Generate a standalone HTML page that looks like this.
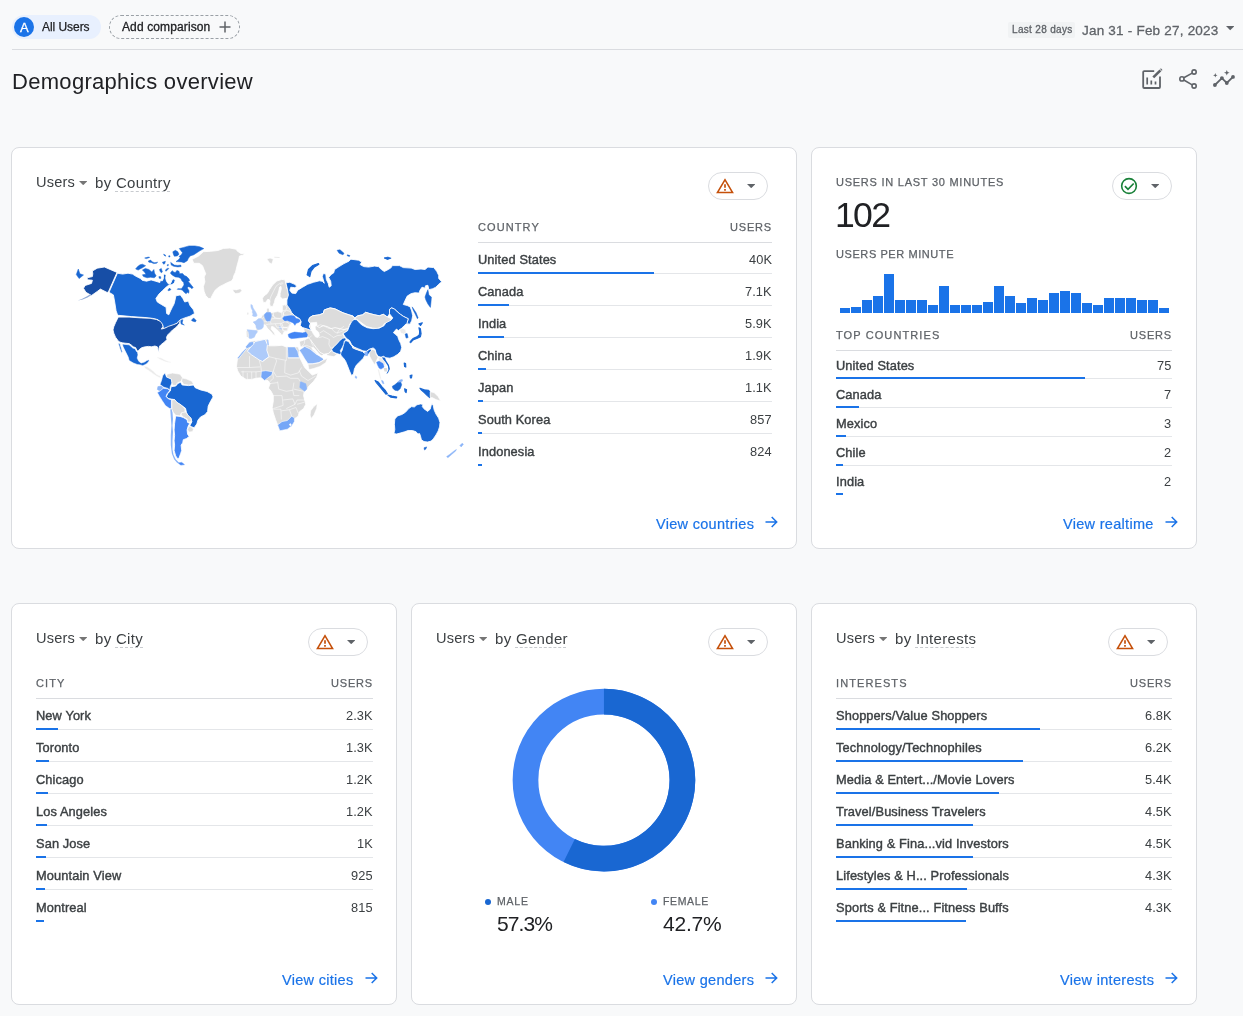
<!DOCTYPE html>
<html>
<head>
<meta charset="utf-8">
<title>Demographics overview</title>
<style>
*{box-sizing:border-box;margin:0;padding:0}
html,body{width:1243px;height:1016px;overflow:hidden;background:#f8f9fa}
body{font-family:"Liberation Sans",sans-serif;color:#202124;position:relative}
.abs{position:absolute}
.card{position:absolute;background:#fff;border:1px solid #dadce0;border-radius:8px}
.t{position:absolute;white-space:nowrap;line-height:1;will-change:transform}
.ttl{color:#3c4043;letter-spacing:.15px}
.hd{color:#5f6368;letter-spacing:1.1px;-webkit-text-stroke:.25px #5f6368}
.nm{color:#3c4043;-webkit-text-stroke:.4px #3c4043;letter-spacing:.12px}
.vl{color:#3c4043;letter-spacing:.1px}
.lk{color:#1a73e8;letter-spacing:.3px;-webkit-text-stroke:.2px #1a73e8}
.pill{position:absolute;width:60px;height:28px;border:1px solid #dadce0;border-radius:14px;background:#fff}
</style>
</head>
<body>

<!-- top bar -->
<div class="abs" style="left:12px;top:15px;width:89px;height:24px;background:#e8f0fe;border-radius:12px"></div>
<div class="abs" style="left:14px;top:17px;width:20px;height:20px;background:#1a73e8;border-radius:10px"></div>
<div class="t " style="left:19.6px;top:20.80px;font-size:13px;color:#fff;-webkit-text-stroke:.3px #fff">A</div>
<div class="t " style="left:42px;top:21.30px;font-size:12px;color:#202124;-webkit-text-stroke:.25px #202124;letter-spacing:-.05px">All Users</div>
<div class="abs" style="left:109px;top:15px;width:131px;height:24px;border-radius:12px;border:1px dashed #9aa0a6"></div>
<div class="t " style="left:122px;top:21.30px;font-size:12px;color:#202124;-webkit-text-stroke:.3px #202124;letter-spacing:.12px">Add comparison</div>
<svg class="abs" style="left:218px;top:20px" width="14" height="14" viewBox="0 0 14 14"><path d="M7 1.5v11M1.5 7h11" stroke="#5f6368" stroke-width="1.5" fill="none"/></svg>
<div class="abs" style="left:1008px;top:22px;width:67px;height:16px;background:#f1f3f4;border-radius:2px"></div>
<div class="t " style="left:1012px;top:25.00px;font-size:10px;color:#5f6368;-webkit-text-stroke:.3px #5f6368;letter-spacing:.32px">Last 28 days</div>
<div class="t " style="left:1082px;top:23.55px;font-size:13.5px;color:#5f6368;-webkit-text-stroke:.3px #5f6368;letter-spacing:.21px">Jan 31 - Feb 27, 2023</div>
<svg class="abs" style="left:1225.8px;top:26.4px" width="8.4" height="4.4" viewBox="0 0 10 5"><path d="M0 0h10L5 5z" fill="#5f6368"/></svg>
<div class="abs" style="left:12px;top:49px;width:1231px;height:1px;background:#dadce0;"></div>
<div class="t " style="left:12px;top:70.50px;font-size:22px;color:#202124;letter-spacing:.3px">Demographics overview</div>
<svg class="abs" style="left:1138px;top:64px" width="105" height="30" viewBox="1138 64 105 30" fill="none" stroke="#5f6368" stroke-linecap="butt">
<!-- edit chart -->
<path d="M1154.2 71.1H1144.2a1 1 0 0 0-1 1V87a1 1 0 0 0 1 1H1159a1 1 0 0 0 1-1V76.6" stroke-width="1.8"/>
<path d="M1147.2 77.6v6.8M1151.3 80.6v3.8M1155.5 81.4v3" stroke-width="1.7"/>
<path d="M1153.3 77.4L1160.4 70.4" stroke-width="2.6"/>
<path d="M1160.9 69.9l.8-.8" stroke-width="2.2"/>
<!-- share -->
<circle cx="1194.1" cy="72" r="2.1" stroke-width="1.6"/>
<circle cx="1181.9" cy="78.9" r="2.1" stroke-width="1.6"/>
<circle cx="1194.1" cy="86" r="2.1" stroke-width="1.6"/>
<path d="M1183.8 77.8L1192.2 73.1M1183.8 80L1192.2 84.9" stroke-width="1.6"/>
<!-- insights -->
<path d="M1214.9 85L1221.9 78.2L1226.8 83L1233 76.9" stroke-width="1.8"/>
<g fill="#5f6368" stroke="none"><circle cx="1214.9" cy="85" r="1.9"/><circle cx="1221.9" cy="78.1" r="1.9"/><circle cx="1226.8" cy="83" r="1.9"/><circle cx="1233" cy="76.9" r="1.9"/>
<path d="M1215.3 73.1l.6 1.6 1.6.6-1.6.6-.6 1.6-.6-1.6-1.6-.6 1.6-.6z"/>
<path d="M1226.8 70l.8 2 2 .8-2 .8-.8 2-.8-2-2-.8 2-.8z"/></g>
</svg>

<div class="card" style="left:11px;top:147px;width:786px;height:402px"></div>
<div class="card" style="left:811px;top:147px;width:386px;height:402px"></div>
<div class="card" style="left:11px;top:603px;width:386px;height:402px"></div>
<div class="card" style="left:411px;top:603px;width:386px;height:402px"></div>
<div class="card" style="left:811px;top:603px;width:386px;height:402px"></div>
<!-- card 1 -->
<div class="t ttl" style="left:35.7px;top:175.00px;font-size:14.6px;">Users</div>
<svg class="abs" style="left:79px;top:180.5px" width="8.4" height="4.2" viewBox="0 0 10 5"><path d="M0 0h10L5 5z" fill="#757575"/></svg>
<div class="t ttl" style="left:94.6px;top:174.70px;font-size:15px;letter-spacing:.32px">by Country</div>
<div class="abs" style="left:115px;top:191px;width:55px;height:0;border-top:1px dashed #c8cbcf"></div>
<div class="pill" style="left:708px;top:172px"></div>
<svg class="abs" style="left:716px;top:178px" width="18" height="16" viewBox="0 0 18 16"><path d="M9 0.2L0.1 15.3h17.8zM9 3.2L15.2 13.8H2.8z" fill="#c5500a" fill-rule="evenodd"/><path d="M9 6.3v3.4M9 11.1v1.7" stroke="#c5500a" stroke-width="1.7" fill="none"/></svg>
<svg class="abs" style="left:746.8px;top:184.1px" width="8.4" height="4.2" viewBox="0 0 10 5"><path d="M0 0h10L5 5z" fill="#5f6368"/></svg>
<svg class="abs" style="left:0;top:0" width="1243" height="1016" viewBox="0 0 1243 1016" stroke="#fff" stroke-width="0.6" stroke-linejoin="round">
<path fill="#e1e1e1" stroke-width="0.85" d="M246.3 336.9L246.1 331.7L247.1 329.7L251.1 330.1L255.9 330.5L256.3 328.1L254.3 323.3L253.1 322.1L255.9 320.9L258.3 318.8L260.7 318.4L262.0 315.2L264.4 314.4L266.4 312.4L266.8 308.8L268.8 308.4L269.2 311.2L270.4 312.4L273.2 312.4L277.6 311.6L281.7 312.8L282.5 310.4L282.5 305.6L284.9 304.8L286.9 304.4L288.9 307.2L291.3 310.4L292.9 313.6L294.5 315.2L294.1 316.0L291.3 315.6L287.3 316.0L284.1 316.4L282.5 318.8L284.9 320.9L287.3 320.5L290.5 321.7L291.3 324.1L289.7 325.3L288.5 328.1L288.1 330.5L286.5 331.3L284.1 331.7L282.9 334.9L281.3 334.9L280.1 332.9L276.8 329.7L272.8 326.5L271.6 326.5L271.2 328.9L274.4 332.9L275.4 335.5L273.2 334.7L270.4 331.3L267.2 328.1L265.6 325.3L263.6 324.5L263.2 327.3L261.5 328.9L258.3 329.7L257.5 331.7L255.5 334.5L254.3 337.3L251.1 338.6L249.1 338.2L246.7 337.1Z"/>
<path fill="#dcdcdc" stroke-width="0.85" d="M262.4 298.3L264.0 295.9L267.2 293.5L269.6 289.5L272.8 284.7L276.8 281.0L281.7 279.4L284.9 279.8L285.8 283.0L286.9 287.9L288.5 292.7L288.9 295.9L287.7 299.1L286.5 298.3L282.5 299.1L280.1 296.7L280.1 293.5L281.3 288.7L280.9 286.3L279.7 287.1L278.8 291.1L277.6 295.1L275.2 299.1L274.4 302.4L272.8 306.4L270.4 306.4L269.6 304.0L270.0 300.7L268.0 299.1L265.6 302.4L263.2 302.4Z"/>
<path fill="#dcdcdc" stroke-width="0.85" d="M251.7 341.0L256.0 340.4L265.7 339.3L267.4 339.3L269.0 345.8L275.5 345.8L282.0 345.3L286.3 346.9L287.4 346.4L298.2 346.9L299.3 350.2L299.3 356.7L302.0 362.1L304.7 367.5L308.0 370.7L312.3 375.1L318.2 372.7L316.6 377.2L313.4 381.6L309.0 385.9L306.9 389.1L304.7 391.3L303.6 395.6L304.7 400.0L305.8 404.3L303.6 408.6L299.3 411.9L298.2 416.2L295.0 418.4L294.4 421.6L291.7 425.9L287.4 429.2L279.8 430.8L277.6 424.9L275.5 419.5L273.3 413.0L272.2 407.5L273.3 401.0L273.3 395.6L271.1 391.3L268.4 388.1L270.1 383.7L267.9 380.5L264.6 380.5L260.9 377.8L256.0 378.3L251.7 379.4L246.2 379.4L240.8 376.1L237.6 370.7L236.5 366.4L237.0 362.1L237.6 357.7L241.9 352.3L246.2 348.0L245.7 346.4L249.5 342.0Z"/>
<path fill="#dcdcdc" stroke-width="0.85" d="M299.3 341.5L305.8 339.3L310.1 336.6L316.6 335.0L327.4 335.0L338.3 337.2L340.0 344.7L333.9 349.1L331.8 351.2L337.2 354.5L333.9 356.7L327.4 355.6L325.3 352.3L322.0 356.1L316.6 353.9L312.3 350.7L308.0 348.5L304.7 346.9L300.4 346.9Z"/>
<path fill="#dcdcdc" stroke-width="0.85" d="M312.1 310.0L320.0 311.0L329.8 312.0L339.7 311.0L351.5 315.9L354.0 319.4L351.5 321.8L349.5 325.7L347.6 330.7L343.1 333.6L344.6 338.1L342.6 339.5L339.7 343.5L335.7 347.4L331.8 349.9L328.9 353.3L323.9 354.3L320.0 352.3L316.1 347.4L310.2 339.5L305.2 334.6L303.3 327.7L306.2 319.8L310.2 315.9Z"/>
<path fill="#174ea6" stroke-width="0.85" d="M92.4 271.0L97.2 268.2L104.4 267.0L117.0 272.4L108.5 291.6L107.2 292.5L100.4 289.1L97.2 291.5L91.5 295.5L85.9 292.3L83.5 288.3L85.1 285.5L91.5 283.4L92.4 280.2L87.5 279.8L87.1 277.8L92.4 276.6L92.8 273.8Z"/>
<path fill="#8fa9d6" stroke="none" d="M91.5 295.1L87.5 297.5L82.7 299.5L77.9 300.5L82.3 298.7L87.1 296.3L90.7 293.9Z"/>
<path fill="#1967d2" stroke="#1967d2" stroke-width="0.5" d="M78.3 269.0L79.9 273.8L83.5 275.0L79.1 278.6L76.3 274.6Z"/>
<path fill="#1967d2" stroke-width="0.85" d="M117.4 273.2L122.7 274.1L128.0 273.2L132.5 274.1L136.0 276.3L140.4 278.5L142.2 280.3L146.6 281.2L151.1 279.9L155.5 281.2L159.9 282.5L160.1 280.7L162.5 280.7L163.6 277.8L163.4 274.9L164.8 274.0L166.0 275.4L165.7 278.4L166.6 281.4L168.3 283.8L170.1 284.0L171.3 282.2L171.9 280.2L173.6 279.0L175.2 280.2L174.3 283.1L171.9 284.6L169.0 284.9L166.0 287.3L162.6 290.5L159.0 294.0L155.9 298.5L157.3 302.0L161.7 304.7L166.1 307.3L166.6 313.5L168.8 314.8L170.5 310.9L172.3 307.3L174.1 303.8L175.0 300.2L175.9 295.8L180.3 294.9L182.9 298.5L184.7 302.0L188.3 301.1L190.0 305.5L193.6 310.0L194.5 313.5L190.0 316.2L184.7 317.9L180.3 319.7L178.5 322.4L174.1 325.0L170.5 326.4L167.0 327.7L163.5 328.6L162.6 325.0L158.1 319.7L152.8 318.4L144.9 317.5L131.6 316.6L118.3 315.3L117.4 314.4L116.1 310.9L114.7 302.0L113.4 294.9L109.0 292.3Z"/>
<path fill="#1967d2" stroke="#1967d2" stroke-width="0.5" d="M170.4 273.1L172.2 270.7L174.0 272.2L175.4 272.5L176.9 270.4L179.0 271.3L179.6 273.7L182.5 273.4L184.3 275.4L186.7 276.6L189.0 279.0L189.6 280.8L188.1 281.3L190.2 283.7L192.0 286.1L193.2 287.3L192.0 288.7L190.2 287.3L188.4 286.7L187.3 287.8L189.0 290.8L188.7 293.2L187.3 292.3L186.1 293.8L184.0 292.0L182.5 290.2L180.8 289.6L177.2 289.3L177.8 288.7L181.3 288.7L182.5 287.3L184.0 284.9L183.7 282.5L181.9 280.8L180.8 278.4L178.4 277.2L175.4 276.9L172.8 275.4L171.3 274.3Z"/>
<path fill="#1967d2" stroke="#1967d2" stroke-width="0.5" d="M179.3 248.6L183.7 247.4L189.0 245.9L194.9 245.9L199.7 246.8L203.8 248.6L200.2 250.6L197.3 252.4L193.8 254.8L190.2 255.9L188.4 258.3L187.3 260.7L184.0 262.7L181.3 261.9L176.0 261.6L178.4 259.8L180.2 257.7L179.0 256.5L181.3 254.8L182.5 252.7L180.8 250.6Z"/>
<path fill="#1967d2" stroke="#1967d2" stroke-width="0.5" d="M172.8 251.8L175.4 250.3L177.8 251.8L179.0 254.2L177.2 255.9L174.3 256.2L173.4 254.2Z"/>
<path fill="#1967d2" stroke="#1967d2" stroke-width="0.5" d="M170.7 262.4L172.2 263.6L174.3 265.1L177.8 265.4L180.8 265.1L181.1 266.6L177.8 266.9L173.7 266.3L171.3 265.1Z"/>
<path fill="#1967d2" stroke="#1967d2" stroke-width="0.5" d="M142.4 270.1L145.3 268.4L148.9 269.5L151.8 271.9L153.9 269.5L154.5 273.1L156.2 276.0L154.2 277.8L150.6 277.2L147.1 277.8L143.5 276.6L142.4 274.8L145.9 274.3L144.7 272.2Z"/>
<path fill="#1967d2" stroke="#1967d2" stroke-width="0.5" d="M137.6 266.6L140.0 264.8L142.4 264.2L145.6 265.7L142.4 267.8L140.0 268.9L138.2 270.1L135.6 268.9Z"/>
<path fill="#1967d2" stroke="#1967d2" stroke-width="0.5" d="M144.7 258.0L148.3 257.1L149.7 257.4L146.5 258.6Z"/>
<path fill="#1967d2" stroke="#1967d2" stroke-width="0.5" d="M148.3 261.0L150.6 260.1L152.4 261.9L154.8 262.7L157.7 262.2L156.5 263.3L153.6 263.6L151.2 262.4L148.9 262.2Z"/>
<path fill="#1967d2" stroke="#1967d2" stroke-width="0.5" d="M162.4 262.2L165.4 261.3L164.8 263.6L163.6 264.2Z"/>
<path fill="#1967d2" stroke="#1967d2" stroke-width="0.5" d="M163.6 254.2L165.4 255.1L165.7 256.2L164.2 255.4Z"/>
<path fill="#1967d2" stroke="#1967d2" stroke-width="0.5" d="M168.8 255.8L169.9 255.8L169.9 257.0L168.8 257.0Z"/>
<path fill="#1967d2" stroke="#1967d2" stroke-width="0.5" d="M167.2 264.8L168.4 264.5L168.2 265.7L167.3 265.8Z"/>
<path fill="#1967d2" stroke="#1967d2" stroke-width="0.5" d="M159.5 269.5L161.3 268.4L162.4 271.9L161.3 272.8L160.1 271.3Z"/>
<path fill="#1967d2" stroke="#1967d2" stroke-width="0.5" d="M165.4 270.1L167.2 268.4L168.9 268.4L167.8 269.5L166.0 271.3Z"/>
<path fill="#1967d2" stroke="#1967d2" stroke-width="0.5" d="M158.9 276.6L160.7 276.7L160.8 278.4L159.2 278.3Z"/>
<path fill="#1967d2" stroke="#1967d2" stroke-width="0.5" d="M167.8 290.2L169.5 288.1L171.0 289.6L168.9 290.8Z"/>
<path fill="#1967d2" stroke="#1967d2" stroke-width="0.5" d="M191.4 320.2L193.6 317.9L196.2 320.6L195.3 321.9L192.2 321.0Z"/>
<path fill="#1967d2" stroke="#1967d2" stroke-width="0.5" d="M180.3 320.6L182.9 319.7L182.1 323.3L184.3 325.0L181.2 324.1Z"/>
<path fill="#174ea6" stroke-width="0.85" d="M118.3 317.1L129.1 317.1L141.2 317.9L150.1 318.3L156.5 319.5L160.5 321.5L162.5 324.3L162.9 326.7L161.3 329.1L164.5 328.3L168.6 326.3L173.4 324.7L177.4 323.1L178.6 321.1L180.2 320.3L179.4 323.5L177.4 325.9L175.0 328.3L172.6 329.9L170.2 332.4L167.8 334.8L166.5 337.2L166.9 339.6L164.5 342.0L161.3 344.4L159.7 346.0L158.9 348.4L159.1 352.5L158.1 350.1L157.3 346.8L154.9 346.0L151.7 346.8L148.4 346.4L145.2 346.8L142.0 347.6L139.6 349.2L138.0 351.3L136.8 350.1L135.6 347.6L133.2 346.8L131.5 345.2L129.1 343.6L125.1 343.2L122.3 342.8L119.5 342.0L117.9 340.4L115.5 337.2L113.8 333.2L113.0 329.9L113.8 326.7L115.5 322.7L117.1 319.5Z"/>
<path fill="#1967d2" d="M122.3 344.0L125.1 344.4L129.1 344.8L131.1 346.4L132.8 348.0L135.2 348.8L136.4 351.3L137.6 352.5L138.0 354.9L137.2 358.1L138.8 361.3L141.2 362.9L144.4 362.1L146.8 360.5L148.8 359.7L149.2 360.9L146.8 363.7L144.4 364.9L142.8 365.7L140.4 364.9L137.2 364.5L133.2 362.9L129.1 360.5L128.3 357.3L126.7 354.1L124.7 350.1L123.1 346.8Z"/>
<path fill="#1967d2" d="M118.3 343.2L119.9 343.6L121.1 347.6L122.3 351.7L121.7 353.3L119.9 348.4Z"/>
<path fill="#ebebeb" d="M143.6 366.1L146.8 366.5L150.1 368.6L153.3 371.0L156.5 374.2L159.7 375.8L161.3 377.4L159.7 377.8L156.5 376.2L152.5 373.4L149.2 371.0L145.2 368.6Z"/>
<path fill="#ebebeb" d="M157.3 356.9L161.3 358.1L166.1 360.5L171.0 362.1L170.6 362.9L165.3 361.7L160.5 359.7L157.1 357.7Z"/>
<path fill="#1967d2" d="M164.9 373.1L166.5 376.9L171.4 379.1L171.9 382.9L170.3 386.6L169.8 389.9L167.6 388.3L163.8 387.2L160.0 384.5L161.6 380.2L162.7 375.8Z"/>
<path fill="#dcdcdc" d="M167.1 374.2L172.5 373.1L180.0 374.2L182.7 378.0L181.1 381.2L177.3 382.9L175.7 385.6L172.5 385.0L171.9 382.3L171.4 379.1L166.5 376.9Z"/>
<path fill="#dcdcdc" d="M182.2 378.0L186.5 379.1L191.9 381.2L193.6 384.5L188.7 385.0L183.8 384.5L181.7 381.2Z"/>
<path fill="#8ab4f8" stroke="#8ab4f8" stroke-width="0.5" d="M157.9 386.6L161.1 386.1L163.3 388.3L160.0 391.0L157.3 389.4Z"/>
<path fill="#4285f4" d="M157.3 392.6L160.0 391.0L163.3 388.3L167.6 388.8L169.8 390.4L167.1 393.7L166.0 396.4L168.7 399.1L171.4 399.6L171.4 408.8L169.2 408.3L165.4 405.6L162.2 400.7L159.5 396.4Z"/>
<path fill="#1967d2" stroke-width="0.85" d="M171.9 386.6L175.7 386.1L177.9 383.4L180.6 382.3L182.2 385.0L188.7 385.6L193.6 385.0L195.2 387.7L200.6 389.9L207.1 391.5L212.0 394.2L213.1 396.9L210.3 401.8L208.2 406.1L207.6 411.5L204.9 414.8L200.6 416.9L197.9 420.2L196.8 424.0L194.1 427.8L191.4 426.7L189.8 425.6L191.9 421.8L190.9 418.0L188.2 415.9L186.5 412.6L185.5 408.3L181.1 405.0L176.8 402.3L174.6 399.6L171.4 399.1L168.1 398.5L166.5 396.4L167.6 393.7L170.3 391.0L170.8 387.7Z"/>
<path fill="#dcdcdc" d="M171.9 400.2L174.6 399.6L176.8 402.3L181.1 405.0L184.9 408.8L184.9 412.6L181.1 413.2L180.0 415.9L175.7 415.3L173.5 412.6L171.9 409.4Z"/>
<path fill="#dcdcdc" d="M181.7 412.6L185.5 412.1L188.7 415.9L190.9 418.0L191.4 421.3L188.2 422.4L187.1 419.1L183.3 416.9L181.1 414.8Z"/>
<path fill="#dcdcdc" d="M188.7 426.1L191.4 427.2L193.6 428.9L192.5 431.6L189.2 432.1L187.6 429.9Z"/>
<path fill="#4285f4" stroke-width="0.85" d="M175.7 415.9L180.0 416.4L183.3 417.5L187.1 419.7L187.6 422.4L189.8 423.4L188.2 426.1L187.1 429.9L187.6 434.3L189.2 436.4L186.5 438.6L183.3 439.7L182.7 442.9L181.1 445.1L181.7 450.5L180.6 453.7L179.0 458.1L177.9 459.2L175.7 455.9L174.1 450.5L174.6 445.1L174.1 440.8L174.6 435.3L174.1 429.9L174.6 423.4L175.2 419.1Z"/>
<path fill="#8ab4f8" stroke="none" d="M171.4 408.8L172.5 412.6L173.0 419.1L172.5 425.6L173.0 432.1L172.5 440.8L172.5 449.4L173.5 454.8L175.7 459.2L178.4 461.9L180.6 463.5L179.5 464.6L176.8 462.4L174.1 459.2L171.9 453.7L170.8 445.1L170.8 435.3L171.4 425.6L170.8 416.9L170.3 409.4Z"/>
<path fill="#4285f4" stroke="#4285f4" stroke-width="0.5" d="M179.0 462.9L181.7 462.4L184.4 464.6L180.6 465.1Z"/>
<path fill="#dcdcdc" stroke-width="0.85" d="M192.1 259.3L198.5 256.1L203.3 251.7L210.6 251.3L217.8 250.5L223.4 248.4L229.9 248.0L236.3 249.3L237.1 250.9L241.1 253.7L244.4 253.3L243.6 254.9L239.5 256.1L238.7 260.1L237.5 264.1L236.3 269.0L235.5 272.2L233.9 275.4L233.1 278.6L231.5 281.0L227.5 282.6L223.4 284.7L219.4 286.7L215.4 289.9L213.0 293.9L210.6 298.7L208.2 298.3L205.7 295.5L204.1 291.5L203.3 286.7L204.9 281.8L204.1 277.0L205.7 273.8L204.1 269.8L202.5 265.7L199.3 263.3L193.7 263.3Z"/>
<path fill="#dcdcdc" d="M232.7 289.5L236.3 289.9L240.3 288.7L241.9 290.7L239.5 293.1L235.5 293.5L233.5 291.5Z"/>
<path fill="#dcdcdc" d="M266.9 258.9L270.1 258.1L273.3 259.3L271.7 264.1L269.3 262.5Z"/>
<path fill="#ebebeb" stroke="none" d="M274.1 256.7L279.8 257.1L279.4 257.9L274.5 257.7Z"/>
<path fill="#ebebeb" stroke="none" d="M247.1 312.4L248.7 312.8L248.3 314.8L246.9 314.4Z"/>
<path fill="#e1e1e1" stroke="none" d="M266.8 308.8L268.8 308.4L269.2 311.2L267.2 311.6Z"/>
<path fill="#aecbfa" stroke="#aecbfa" stroke-width="0.5" d="M250.9 304.4L252.3 305.2L253.1 308.0L254.7 310.4L256.1 312.8L257.1 315.2L256.3 316.4L253.9 316.4L252.3 315.6L253.1 314.0L252.3 312.4L252.5 310.4L251.5 308.8L250.9 306.8Z"/>
<path fill="#aecbfa" stroke="#aecbfa" stroke-width="0.5" d="M253.1 322.1L255.9 320.9L258.3 318.8L260.7 318.4L263.2 320.9L263.6 324.1L263.2 327.3L261.5 328.9L258.3 329.7L256.3 328.1L255.9 324.9L254.3 323.3Z"/>
<path fill="#76a7f7" stroke="#76a7f7" stroke-width="0.5" d="M264.4 314.4L266.4 312.4L270.4 312.4L271.6 315.2L270.8 318.4L270.4 321.3L267.2 321.7L265.6 319.2L264.4 316.8Z"/>
<path fill="#aecbfa" stroke="#aecbfa" stroke-width="0.5" d="M247.1 329.7L251.1 330.1L255.9 330.5L257.5 331.7L255.5 334.5L254.3 337.3L251.1 338.6L249.1 338.2L249.1 334.5L248.3 331.7Z"/>
<path fill="#dcdcdc" d="M273.2 312.4L277.6 311.6L281.7 312.8L282.1 316.8L280.1 318.4L275.2 318.0L273.6 316.0Z"/>
<path fill="#dcdcdc" d="M283.3 312.8L286.5 310.4L289.7 311.2L291.3 313.6L290.5 315.2L286.5 315.2L283.7 315.2Z"/>
<path fill="#dcdcdc" d="M282.5 305.6L284.9 304.8L286.9 307.2L285.7 310.4L282.5 310.4Z"/>
<path fill="#dcdcdc" d="M281.7 323.3L284.9 321.7L288.1 322.5L289.7 324.9L287.3 327.3L283.3 327.3Z"/>
<path fill="#dcdcdc" d="M282.5 327.7L287.3 327.7L287.7 330.1L283.3 330.5Z"/>
<path fill="#aecbfa" stroke="#aecbfa" stroke-width="0.5" d="M279.2 326.5L281.3 327.3L281.7 329.3L279.7 328.5Z"/>
<path fill="#4285f4" stroke="#4285f4" stroke-width="0.5" d="M282.5 318.8L284.1 316.4L287.3 316.0L291.3 315.6L294.1 316.0L296.1 318.4L299.4 319.2L300.6 320.9L298.6 322.5L296.1 323.3L294.9 325.3L293.3 322.9L290.5 321.7L287.3 320.5L284.9 320.9Z"/>
<path fill="#4285f4" stroke="#4285f4" stroke-width="0.5" d="M288.1 334.5L290.5 333.3L294.5 332.1L298.6 332.5L302.6 332.9L305.8 332.1L307.4 334.5L307.0 336.9L303.4 337.3L299.4 337.8L295.3 338.2L291.3 338.6L288.9 337.3Z"/>
<path fill="#aecbfa" stroke-width="0.85" d="M247.3 351.2L255.4 341.5L265.2 339.3L267.4 344.7L266.8 350.2L269.0 356.7L262.5 361.5L259.2 359.9L251.7 355.0Z"/>
<path fill="#8ab4f8" d="M245.7 346.4L249.5 342.0L253.3 341.5L253.8 344.2L250.6 346.9L246.2 349.1Z"/>
<path fill="#8ab4f8" d="M237.0 358.3L241.9 352.3L245.7 348.5L246.2 349.6L243.0 353.4L238.7 358.8Z"/>
<path fill="#aecbfa" stroke="none" d="M266.8 339.3L268.4 339.9L269.0 345.3L267.4 344.7Z"/>
<path fill="#8ab4f8" d="M287.4 346.9L295.0 346.9L297.7 351.2L299.3 357.7L287.9 357.7Z"/>
<path fill="#76a7f7" d="M261.4 371.3L265.7 370.7L272.8 371.8L271.7 375.1L267.9 377.8L264.6 380.5L260.9 377.2Z"/>
<path fill="#8ab4f8" stroke="#8ab4f8" stroke-width="0.5" d="M300.4 381.6L305.8 383.7L306.9 389.1L304.7 391.3L299.8 387.5Z"/>
<path fill="#76a7f7" d="M277.6 424.9L282.0 421.6L287.4 420.5L291.7 416.2L294.4 417.8L294.4 421.6L291.7 425.9L287.4 429.2L279.8 430.8Z"/>
<path fill="#ffffff" stroke="none" d="M289.0 424.3L290.6 423.2L291.7 424.9L290.1 426.2Z"/>
<path fill="#dcdcdc" d="M310.7 410.8L313.9 406.5L317.2 403.8L316.6 408.6L313.9 415.1L311.2 418.4L310.1 415.1Z"/>
<path fill="#8ab4f8" d="M299.3 350.2L304.7 346.4L310.1 349.1L316.6 354.5L322.0 356.7L323.7 359.9L318.8 362.6L312.3 363.7L308.0 363.7L304.7 358.8L301.5 353.4Z"/>
<path fill="#dcdcdc" d="M308.0 364.2L312.3 364.0L318.8 362.9L323.7 360.1L327.4 358.3L325.8 362.6L319.9 366.4L313.4 368.6L309.0 369.6Z"/>
<path fill="#1967d2" stroke-width="0.85" d="M285.9 282.8L289.8 282.3L294.8 284.3L296.7 286.3L294.8 287.7L290.8 287.2L289.8 290.2L291.8 293.1L295.7 293.6L297.7 290.2L302.6 287.2L307.6 284.3L313.5 282.3L319.4 280.8L322.3 281.3L324.3 283.3L322.3 276.4L323.3 273.5L325.8 274.0L326.3 279.4L328.2 283.3L329.2 287.2L331.2 285.8L330.7 281.3L328.7 277.4L331.2 274.4L333.6 273.0L334.6 269.5L339.1 266.6L344.0 263.6L348.9 261.2L350.9 259.2L358.7 260.2L361.7 262.1L360.2 264.6L363.7 266.6L368.6 267.1L374.5 266.1L378.4 266.6L381.4 269.5L384.3 271.5L388.3 269.5L391.2 267.6L392.2 265.6L399.4 265.6L403.3 267.6L411.2 268.1L415.1 269.5L421.0 269.0L425.0 269.5L427.9 267.1L433.8 267.6L436.8 271.5L438.7 275.4L438.7 278.4L441.7 281.8L438.7 284.3L435.8 287.2L432.8 288.7L428.9 289.7L427.9 285.3L425.5 285.8L425.0 288.2L422.0 287.2L420.0 290.2L419.1 293.1L415.1 292.7L411.2 293.6L407.2 296.1L405.3 300.0L403.3 304.5L407.2 305.5L410.2 306.9L411.7 310.9L412.7 315.8L411.7 320.7L410.2 323.7L408.7 324.6L407.2 322.7L408.2 318.7L406.3 317.8L403.3 316.3L400.4 314.3L397.4 311.9L394.4 308.9L391.5 307.9L389.5 309.4L389.5 313.8L387.6 316.8L386.3 316.3L383.3 314.3L379.4 315.8L374.5 314.8L370.6 313.8L365.6 312.3L362.7 314.8L357.8 315.8L354.8 317.8L352.8 315.8L348.9 314.8L343.0 312.8L339.1 310.9L335.1 308.9L330.2 307.9L324.3 309.9L323.3 313.3L319.4 314.8L312.5 315.8L309.5 317.8L308.5 320.7L310.5 323.7L309.5 326.6L311.5 330.6L307.6 329.1L302.6 327.6L300.2 325.6L301.2 321.7L299.7 318.7L294.8 315.8L291.8 312.8L289.8 308.9L286.9 305.0L286.9 300.0L288.4 295.1L287.4 289.2Z"/>
<path fill="#1967d2" stroke="#1967d2" stroke-width="1.1" d="M307.1 274.9L308.5 269.5L312.5 265.6L318.4 263.6L318.9 264.4L314.0 267.4L311.0 271.3L309.8 276.6Z"/>
<path fill="#1967d2" stroke="#1967d2" stroke-width="0.5" d="M337.1 250.3L340.0 249.8L344.0 253.3L343.0 254.8L339.1 253.3Z"/>
<path fill="#1967d2" stroke="#1967d2" stroke-width="0.5" d="M347.4 254.8L349.9 255.6L349.4 256.5L347.2 255.7Z"/>
<path fill="#1967d2" stroke="#1967d2" stroke-width="0.5" d="M384.3 257.7L388.3 257.2L391.2 258.2L387.3 259.4Z"/>
<path fill="#1967d2" stroke="#1967d2" stroke-width="0.5" d="M384.1 258.2L387.6 257.2L390.5 258.2L387.6 259.4Z"/>
<path fill="#1967d2" stroke="#1967d2" stroke-width="0.5" d="M427.9 289.7L428.9 295.1L431.4 297.1L430.9 303.0L430.4 307.4L427.9 304.0L425.9 300.0L425.0 297.1L426.4 293.1Z"/>
<path fill="#1967d2" stroke="#1967d2" stroke-width="0.5" d="M412.2 306.9L413.6 308.9L416.1 312.8L418.1 317.8L417.4 318.7L415.1 313.8L413.1 309.9Z"/>
<path fill="#dcdcdc" stroke-width="0.85" d="M309.5 317.8L312.5 315.8L319.4 314.8L323.3 313.3L324.3 309.9L330.2 307.9L335.1 308.9L339.1 310.9L343.0 312.8L348.9 314.8L352.8 316.3L354.8 318.2L352.8 321.7L349.9 323.7L348.9 326.6L347.9 328.6L344.0 329.6L339.1 328.6L335.1 327.6L331.2 328.6L327.2 326.6L323.3 325.6L319.4 327.6L316.4 325.6L313.5 325.6L311.5 330.6L309.5 326.6L310.5 323.7L308.5 320.7Z"/>
<path fill="#dcdcdc" stroke-width="0.85" d="M354.8 318.2L357.8 315.8L362.7 314.8L365.6 312.3L370.6 313.8L374.5 314.8L379.4 315.8L383.3 314.3L386.3 316.3L389.3 317.8L391.7 318.7L389.3 321.7L384.3 323.7L382.4 326.6L377.4 328.6L372.5 328.1L366.6 326.6L362.7 323.7L358.7 320.7Z"/>
<path fill="#1967d2" stroke-width="0.85" d="M343.1 333.6L347.6 330.7L349.5 325.7L351.5 321.8L354.0 319.4L356.9 319.8L359.4 322.8L362.3 325.3L367.2 327.7L373.1 328.7L379.1 328.2L384.0 325.7L385.9 322.8L390.9 320.3L392.8 317.9L389.5 313.8L389.5 309.4L391.5 307.9L394.4 308.9L397.4 311.9L400.4 314.3L403.3 316.3L406.3 317.8L408.2 318.7L407.2 322.7L408.7 324.6L406.3 323.7L404.3 325.6L401.3 328.6L398.4 330.6L396.4 329.1L393.5 332.5L393.3 332.6L395.8 334.6L397.8 336.6L398.7 339.5L400.7 343.5L401.7 347.4L400.7 351.3L397.8 354.3L393.8 356.8L389.9 358.2L385.9 357.7L383.5 356.3L381.0 357.2L378.1 356.3L376.1 353.3L375.1 349.4L373.1 347.9L370.2 348.9L366.3 351.3L362.3 350.8L358.4 349.4L354.4 347.4L351.5 344.4L349.5 340.5L346.6 338.5L344.6 336.1Z"/>
<path fill="#ebebeb" d="M399.7 329.7L402.7 328.2L405.6 329.7L406.1 333.1L403.7 334.1L400.7 333.1Z"/>
<path fill="#1967d2" stroke="#1967d2" stroke-width="0.5" d="M405.1 334.1L407.1 333.6L408.1 337.6L406.1 338.1Z"/>
<path fill="#1967d2" stroke="#1967d2" stroke-width="1.1" d="M418.9 327.7L420.4 328.7L421.1 333.6L420.4 336.8L417.4 338.3L413.5 339.7L411.5 341.7L411.0 340.7L413.0 338.5L416.9 336.8L419.4 334.6L419.6 331.2Z"/>
<path fill="#1967d2" stroke="#1967d2" stroke-width="1.1" d="M418.9 323.8L422.4 322.8L420.6 325.5Z"/>
<path fill="#1967d2" stroke="#1967d2" stroke-width="0.5" d="M410.1 341.0L411.5 341.5L411.0 343.0L409.8 342.5Z"/>
<path fill="#1967d2" stroke-width="0.85" d="M344.1 342.5L345.6 340.5L348.5 341.5L350.5 344.4L353.5 347.9L358.4 349.9L362.3 351.3L364.3 353.3L366.3 351.8L369.2 349.4L371.2 348.9L371.7 351.3L369.2 353.3L367.2 356.3L364.8 355.3L363.3 358.2L359.4 362.2L356.4 365.1L354.4 369.1L353.5 374.0L351.5 375.5L349.5 371.0L347.6 366.1L345.6 361.2L343.6 358.2L341.2 355.8L340.2 353.3L342.1 350.4L343.1 346.4Z"/>
<path fill="#1967d2" d="M331.8 349.4L334.3 346.4L337.2 343.5L339.7 340.5L342.2 338.5L345.1 337.8L345.9 339.5L344.1 341.5L343.6 344.4L342.2 347.4L340.2 350.8L341.2 353.3L339.7 354.3L336.3 353.3L332.8 351.8Z"/>
<path fill="#ebebeb" d="M352.5 346.4L356.4 347.9L362.3 350.4L361.8 351.3L355.9 349.4L352.5 347.9Z"/>
<path fill="#8ab4f8" stroke="#8ab4f8" stroke-width="0.5" d="M364.8 352.3L367.2 351.8L367.7 355.3L365.3 355.8Z"/>
<path fill="#dcdcdc" d="M369.2 353.3L372.2 349.4L375.1 350.4L376.1 354.3L378.1 357.2L376.1 361.2L374.6 365.1L373.1 362.2L371.2 359.2L369.7 356.3Z"/>
<path fill="#ebebeb" d="M378.1 357.2L381.5 357.7L385.0 362.2L385.9 367.6L383.0 363.6L379.1 361.2Z"/>
<path fill="#4285f4" stroke="#4285f4" stroke-width="0.5" d="M376.6 362.2L379.1 361.2L383.0 363.6L384.0 367.1L381.0 369.1L379.1 368.1L377.6 365.1Z"/>
<path fill="#ebebeb" d="M377.6 369.1L379.1 369.1L380.5 375.0L381.5 379.9L380.2 378.9L378.6 374.0Z"/>
<path fill="#1967d2" stroke="none" d="M382.0 357.2L385.0 357.7L385.9 360.2L388.9 365.1L389.9 369.1L387.9 373.0L386.4 374.0L388.4 370.0L387.9 366.1L385.5 362.2L383.0 359.2Z"/>
<path fill="#dcdcdc" stroke="none" d="M383.5 368.1L386.9 368.1L387.4 371.5L384.5 371.5Z"/>
<path fill="#8ab4f8" stroke="#8ab4f8" stroke-width="0.5" d="M381.5 380.4L383.0 380.9L384.0 383.8L382.5 383.3Z"/>
<path fill="#1967d2" stroke="#1967d2" stroke-width="1.1" d="M375.1 380.4L378.1 381.9L382.0 386.8L385.5 390.7L387.4 393.7L385.9 394.2L383.0 390.7L379.1 385.8L376.1 382.3Z"/>
<path fill="#1967d2" stroke="#1967d2" stroke-width="0.5" d="M392.3 386.3L394.8 384.8L397.8 382.3L400.7 381.9L401.7 384.8L400.2 388.7L397.8 390.7L394.8 390.2L392.8 388.2Z"/>
<path fill="#8ab4f8" stroke="#8ab4f8" stroke-width="0.5" d="M397.8 382.1L399.7 380.1L402.2 379.4L402.5 381.1L400.7 381.9Z"/>
<path fill="#1967d2" stroke="#1967d2" stroke-width="1.1" d="M387.9 395.1L391.9 396.1L396.8 397.1L396.3 398.0L390.9 397.2Z"/>
<path fill="#1967d2" stroke="#1967d2" stroke-width="1.1" d="M404.6 388.7L406.6 389.7L406.1 392.7L405.1 391.7Z"/>
<path fill="#1967d2" stroke="#1967d2" stroke-width="1.1" d="M404.2 363.1L405.6 363.6L405.8 367.1L404.6 366.6Z"/>
<path fill="#1967d2" stroke="#1967d2" stroke-width="1.1" d="M410.1 375.5L412.0 375.0L411.5 377.9L410.4 377.9Z"/>
<path fill="#8ab4f8" stroke="#8ab4f8" stroke-width="0.5" d="M355.4 375.9L356.9 376.9L356.4 378.4L355.2 377.7Z"/>
<path fill="#1967d2" stroke="#1967d2" stroke-width="1.1" d="M419.9 388.2L424.3 389.7L428.3 390.2L429.7 391.7L429.7 397.6L427.3 395.6L424.3 392.7L421.4 390.2Z"/>
<path fill="#dcdcdc" d="M430.2 391.7L434.2 392.7L438.1 396.6L440.6 401.0L436.1 399.6L432.2 397.6L430.2 397.6Z"/>
<path fill="#1967d2" stroke-width="0.85" d="M393.9 433.6L394.8 429.6L394.4 424.3L394.8 419.0L397.5 415.9L401.9 414.5L405.4 412.3L409.0 408.3L411.6 406.6L414.3 407.0L416.9 404.8L420.5 403.9L423.1 404.4L422.3 406.6L424.0 408.8L427.6 411.4L430.2 409.2L431.1 405.7L432.0 403.5L433.3 405.7L434.2 410.1L436.0 414.1L438.6 418.1L440.0 422.5L439.5 426.9L438.2 430.9L436.0 434.9L433.3 438.9L431.1 441.1L427.6 442.0L424.0 441.6L421.4 439.8L420.5 436.2L419.6 433.6L417.8 434.0L416.1 431.8L412.5 430.5L408.1 430.5L404.5 431.8L400.1 433.1L396.6 434.0Z"/>
<path fill="#1967d2" stroke="#1967d2" stroke-width="0.5" d="M424.0 447.8L426.7 446.9L425.8 449.1L424.5 450.0Z"/>
<path fill="#8ab4f8" stroke="#8ab4f8" stroke-width="0.5" d="M459.9 445.5L462.1 443.3L463.4 444.2L461.2 446.9Z"/>
<path fill="#8ab4f8" stroke="#8ab4f8" stroke-width="0.5" d="M446.6 456.6L449.7 454.4L454.1 450.9L456.4 449.5L455.7 450.9L451.5 454.6L447.9 457.7Z"/>
<path fill="#ffffff" d="M310.7 322.8L316.6 322.3L317.1 324.8L315.1 326.7L315.6 329.7L318.5 332.1L319.5 335.6L318.1 337.6L315.6 337.1L313.1 333.6L311.7 330.7L310.7 326.7Z"/>
<path fill="#ffffff" d="M311.7 347.2L313.6 347.4L316.6 350.8L319.5 354.3L322.0 356.3L324.4 357.0L324.0 358.0L321.0 357.2L318.1 354.8L314.6 351.3L312.1 348.9Z"/>
<path d="M249.5 356.1L249.5 367.5M237.0 367.5L249.5 367.5L260.3 366.9M259.2 360.1L260.9 366.4L261.4 371.3M262.5 361.5L269.0 356.7L275.5 358.3L276.6 361.0L274.4 367.5L273.3 371.3M275.5 358.3L286.3 360.4M286.3 346.9L286.3 360.4L285.2 361.0L284.7 372.9M287.9 358.0L299.3 358.0M284.7 372.9L290.6 375.1L298.2 372.9L301.5 367.5M299.3 370.7L301.5 376.1L308.0 380.5L315.5 376.1M273.3 371.3L276.6 376.7L286.3 376.1L290.6 378.3L298.2 378.3L300.4 381.6M277.6 381.6L278.7 389.1L286.3 391.3L292.8 390.2L293.9 382.6M269.0 383.7L277.6 382.6M273.3 395.6L282.0 395.6L283.1 405.4L273.3 408.6M283.1 400.0L292.8 398.9L295.0 404.3L286.3 408.6M293.9 389.1L303.6 391.3L304.7 400.0L297.1 400.0L295.0 404.3M297.1 404.3L304.7 402.1M273.3 409.2L280.9 409.2L281.4 419.5M281.4 410.8L289.5 409.7L291.7 416.2M289.5 409.7L296.0 407.5L298.2 413.0M243.0 370.7L243.0 378.3M247.3 372.9L247.3 379.4M251.7 371.8L251.7 379.4M256.0 371.8L256.0 378.3M240.8 371.8L256.0 371.8L261.4 371.3M272.8 371.8L273.3 378.3L269.0 382.6M292.8 390.2L293.9 395.6L299.3 395.6M316.6 326.2L320.5 324.8L324.4 326.2L328.4 328.2L331.8 328.7L334.3 331.7L337.2 333.1L342.2 331.2L346.6 328.7M319.5 333.1L323.5 330.7L327.4 333.1L331.3 335.6L333.3 337.6M319.0 337.6L322.5 336.6L326.4 338.1L329.4 339.5M329.4 339.5L328.9 344.4L330.8 348.4M330.8 348.4L334.3 346.4L337.2 343.5L339.7 340.5L342.2 338.5M333.3 337.6L337.2 335.6L341.7 335.1L344.1 333.6M310.7 339.5L311.7 343.5L313.6 346.4M299.8 339.0L304.8 338.8L309.7 337.6M304.8 339.5L304.3 343.5L301.8 346.4M301.8 346.4L306.7 345.4L311.7 347.4M309.7 337.6L311.7 335.6M337.2 333.1L339.2 329.7L344.1 326.2M269.2 302.0L270.8 296.7L273.6 291.1L276.0 286.3L279.2 283.8L282.5 282.6M280.1 284.7L283.3 283.4M263.6 320.9L267.2 321.7L270.4 321.3L271.6 318.8L275.2 318.4L280.1 318.8L282.5 318.8M270.4 321.3L271.2 324.1L275.2 323.7L281.7 323.3M275.2 323.7L276.8 327.3L282.5 327.7L287.7 327.7M271.6 315.2L273.6 316.0L275.2 318.0M282.1 316.8L283.7 315.2L283.3 312.8L282.5 310.4M264.4 316.8L262.4 318.8M247.9 331.7L248.3 336.9M280.1 323.3L281.7 327.3L283.3 331.3M265.6 324.9L268.8 324.1L271.2 324.1" fill="none" stroke="#fff" stroke-width="0.55" stroke-opacity="0.95"/>
</svg>
<div class="t hd" style="left:478px;top:221.90px;font-size:11px;">COUNTRY</div>
<div class="t hd" style="right:471.5px;top:221.90px;font-size:11px;letter-spacing:.8px;margin-right:-.8px">USERS</div>
<div class="abs" style="left:478px;top:242px;width:294px;height:1px;background:#dadce0;"></div>
<div class="t nm" style="left:478px;top:253.50px;font-size:12.8px;">United States</div>
<div class="t vl" style="right:471.29999999999995px;top:253.50px;font-size:12.8px;">40K</div>
<div class="abs" style="left:478px;top:273px;width:294px;height:1px;background:#e4e6e9;"></div>
<div class="abs" style="left:478px;top:272px;width:176px;height:2px;background:#1a73e8;"></div>
<div class="t nm" style="left:478px;top:285.50px;font-size:12.8px;">Canada</div>
<div class="t vl" style="right:471.29999999999995px;top:285.50px;font-size:12.8px;">7.1K</div>
<div class="abs" style="left:478px;top:305px;width:294px;height:1px;background:#e4e6e9;"></div>
<div class="abs" style="left:478px;top:304px;width:31px;height:2px;background:#1a73e8;"></div>
<div class="t nm" style="left:478px;top:317.50px;font-size:12.8px;">India</div>
<div class="t vl" style="right:471.29999999999995px;top:317.50px;font-size:12.8px;">5.9K</div>
<div class="abs" style="left:478px;top:337px;width:294px;height:1px;background:#e4e6e9;"></div>
<div class="abs" style="left:478px;top:336px;width:26px;height:2px;background:#1a73e8;"></div>
<div class="t nm" style="left:478px;top:349.50px;font-size:12.8px;">China</div>
<div class="t vl" style="right:471.29999999999995px;top:349.50px;font-size:12.8px;">1.9K</div>
<div class="abs" style="left:478px;top:369px;width:294px;height:1px;background:#e4e6e9;"></div>
<div class="abs" style="left:478px;top:368px;width:8px;height:2px;background:#1a73e8;"></div>
<div class="t nm" style="left:478px;top:381.50px;font-size:12.8px;">Japan</div>
<div class="t vl" style="right:471.29999999999995px;top:381.50px;font-size:12.8px;">1.1K</div>
<div class="abs" style="left:478px;top:401px;width:294px;height:1px;background:#e4e6e9;"></div>
<div class="abs" style="left:478px;top:400px;width:5px;height:2px;background:#1a73e8;"></div>
<div class="t nm" style="left:478px;top:413.50px;font-size:12.8px;">South Korea</div>
<div class="t vl" style="right:471.29999999999995px;top:413.50px;font-size:12.8px;">857</div>
<div class="abs" style="left:478px;top:433px;width:294px;height:1px;background:#e4e6e9;"></div>
<div class="abs" style="left:478px;top:432px;width:4px;height:2px;background:#1a73e8;"></div>
<div class="t nm" style="left:478px;top:445.50px;font-size:12.8px;">Indonesia</div>
<div class="t vl" style="right:471.29999999999995px;top:445.50px;font-size:12.8px;">824</div>
<div class="abs" style="left:478px;top:464px;width:4px;height:2px;background:#1a73e8;"></div>
<div class="t lk" style="right:489px;top:516.55px;font-size:14.5px;">View countries</div>
<svg class="abs" style="left:765px;top:516.3px" width="13" height="12" viewBox="0 0 13 12"><path d="M0.5 6h11M6.7 1l5 5-5 5" fill="none" stroke="#1a73e8" stroke-width="1.5"/></svg>
<!-- card 2 -->
<div class="t hd" style="left:836px;top:176.80px;font-size:11px;letter-spacing:.75px">USERS IN LAST 30 MINUTES</div>
<div class="t " style="left:835.3px;top:198.40px;font-size:35.6px;color:#202124;letter-spacing:-1.7px">102</div>
<div class="t hd" style="left:836px;top:248.70px;font-size:11px;letter-spacing:.58px">USERS PER MINUTE</div>
<div class="pill" style="left:1112px;top:172px"></div>
<svg class="abs" style="left:1120.05px;top:177px" width="18" height="18" viewBox="0 0 18 18"><circle cx="9" cy="9" r="7.35" fill="none" stroke="#188038" stroke-width="1.6"/><path d="M4.9 9.2l3.1 3.1 5.7-5.8" fill="none" stroke="#188038" stroke-width="1.7"/></svg>
<svg class="abs" style="left:1150.8px;top:184.1px" width="8.4" height="4.2" viewBox="0 0 10 5"><path d="M0 0h10L5 5z" fill="#5f6368"/></svg>
<div class="abs" style="left:840.05px;top:308.36px;width:9.6px;height:5.14px;background:#1a73e8;"></div>
<div class="abs" style="left:851.06px;top:306.65px;width:9.6px;height:6.85px;background:#1a73e8;"></div>
<div class="abs" style="left:862.07px;top:299.8px;width:9.6px;height:13.7px;background:#1a73e8;"></div>
<div class="abs" style="left:873.09px;top:296.37px;width:9.6px;height:17.13px;background:#1a73e8;"></div>
<div class="abs" style="left:884.1px;top:274.1px;width:9.6px;height:39.4px;background:#1a73e8;"></div>
<div class="abs" style="left:895.11px;top:299.8px;width:9.6px;height:13.7px;background:#1a73e8;"></div>
<div class="abs" style="left:906.12px;top:299.8px;width:9.6px;height:13.7px;background:#1a73e8;"></div>
<div class="abs" style="left:917.13px;top:299.8px;width:9.6px;height:13.7px;background:#1a73e8;"></div>
<div class="abs" style="left:928.15px;top:304.93px;width:9.6px;height:8.57px;background:#1a73e8;"></div>
<div class="abs" style="left:939.16px;top:286.09px;width:9.6px;height:27.41px;background:#1a73e8;"></div>
<div class="abs" style="left:950.17px;top:304.93px;width:9.6px;height:8.57px;background:#1a73e8;"></div>
<div class="abs" style="left:961.18px;top:304.93px;width:9.6px;height:8.57px;background:#1a73e8;"></div>
<div class="abs" style="left:972.19px;top:304.93px;width:9.6px;height:8.57px;background:#1a73e8;"></div>
<div class="abs" style="left:983.21px;top:301.51px;width:9.6px;height:11.99px;background:#1a73e8;"></div>
<div class="abs" style="left:994.22px;top:286.09px;width:9.6px;height:27.41px;background:#1a73e8;"></div>
<div class="abs" style="left:1005.23px;top:296.37px;width:9.6px;height:17.13px;background:#1a73e8;"></div>
<div class="abs" style="left:1016.24px;top:303.22px;width:9.6px;height:10.28px;background:#1a73e8;"></div>
<div class="abs" style="left:1027.25px;top:298.08px;width:9.6px;height:15.42px;background:#1a73e8;"></div>
<div class="abs" style="left:1038.27px;top:299.8px;width:9.6px;height:13.7px;background:#1a73e8;"></div>
<div class="abs" style="left:1049.28px;top:292.94px;width:9.6px;height:20.56px;background:#1a73e8;"></div>
<div class="abs" style="left:1060.29px;top:291.23px;width:9.6px;height:22.27px;background:#1a73e8;"></div>
<div class="abs" style="left:1071.3px;top:292.94px;width:9.6px;height:20.56px;background:#1a73e8;"></div>
<div class="abs" style="left:1082.31px;top:303.22px;width:9.6px;height:10.28px;background:#1a73e8;"></div>
<div class="abs" style="left:1093.33px;top:304.93px;width:9.6px;height:8.57px;background:#1a73e8;"></div>
<div class="abs" style="left:1104.34px;top:298.08px;width:9.6px;height:15.42px;background:#1a73e8;"></div>
<div class="abs" style="left:1115.35px;top:298.08px;width:9.6px;height:15.42px;background:#1a73e8;"></div>
<div class="abs" style="left:1126.36px;top:298.08px;width:9.6px;height:15.42px;background:#1a73e8;"></div>
<div class="abs" style="left:1137.37px;top:299.8px;width:9.6px;height:13.7px;background:#1a73e8;"></div>
<div class="abs" style="left:1148.39px;top:299.8px;width:9.6px;height:13.7px;background:#1a73e8;"></div>
<div class="abs" style="left:1159.4px;top:308.36px;width:9.6px;height:5.14px;background:#1a73e8;"></div>
<div class="t hd" style="left:836px;top:329.80px;font-size:11px;">TOP COUNTRIES</div>
<div class="t hd" style="right:71.5px;top:329.80px;font-size:11px;letter-spacing:.8px;margin-right:-.8px">USERS</div>
<div class="abs" style="left:836px;top:350px;width:336px;height:1px;background:#dadce0;"></div>
<div class="t nm" style="left:836px;top:359.80px;font-size:12.8px;">United States</div>
<div class="t vl" style="right:71.29999999999995px;top:359.80px;font-size:12.8px;">75</div>
<div class="abs" style="left:836px;top:378px;width:336px;height:1px;background:#e4e6e9;"></div>
<div class="abs" style="left:836px;top:377px;width:249px;height:2px;background:#1a73e8;"></div>
<div class="t nm" style="left:836px;top:388.80px;font-size:12.8px;">Canada</div>
<div class="t vl" style="right:71.29999999999995px;top:388.80px;font-size:12.8px;">7</div>
<div class="abs" style="left:836px;top:407px;width:336px;height:1px;background:#e4e6e9;"></div>
<div class="abs" style="left:836px;top:406px;width:23px;height:2px;background:#1a73e8;"></div>
<div class="t nm" style="left:836px;top:417.80px;font-size:12.8px;">Mexico</div>
<div class="t vl" style="right:71.29999999999995px;top:417.80px;font-size:12.8px;">3</div>
<div class="abs" style="left:836px;top:436px;width:336px;height:1px;background:#e4e6e9;"></div>
<div class="abs" style="left:836px;top:435px;width:10px;height:2px;background:#1a73e8;"></div>
<div class="t nm" style="left:836px;top:446.80px;font-size:12.8px;">Chile</div>
<div class="t vl" style="right:71.29999999999995px;top:446.80px;font-size:12.8px;">2</div>
<div class="abs" style="left:836px;top:465px;width:336px;height:1px;background:#e4e6e9;"></div>
<div class="abs" style="left:836px;top:464px;width:7px;height:2px;background:#1a73e8;"></div>
<div class="t nm" style="left:836px;top:475.80px;font-size:12.8px;">India</div>
<div class="t vl" style="right:71.29999999999995px;top:475.80px;font-size:12.8px;">2</div>
<div class="abs" style="left:836px;top:493px;width:7px;height:2px;background:#1a73e8;"></div>
<div class="t lk" style="right:89px;top:516.55px;font-size:14.5px;">View realtime</div>
<svg class="abs" style="left:1165px;top:516.3px" width="13" height="12" viewBox="0 0 13 12"><path d="M0.5 6h11M6.7 1l5 5-5 5" fill="none" stroke="#1a73e8" stroke-width="1.5"/></svg>
<!-- card 3 -->
<div class="t ttl" style="left:35.7px;top:631.00px;font-size:14.6px;">Users</div>
<svg class="abs" style="left:79px;top:636.5px" width="8.4" height="4.2" viewBox="0 0 10 5"><path d="M0 0h10L5 5z" fill="#757575"/></svg>
<div class="t ttl" style="left:94.6px;top:630.70px;font-size:15px;letter-spacing:.32px">by City</div>
<div class="abs" style="left:115px;top:647px;width:28px;height:0;border-top:1px dashed #c8cbcf"></div>
<div class="pill" style="left:308px;top:628px"></div>
<svg class="abs" style="left:316px;top:634px" width="18" height="16" viewBox="0 0 18 16"><path d="M9 0.2L0.1 15.3h17.8zM9 3.2L15.2 13.8H2.8z" fill="#c5500a" fill-rule="evenodd"/><path d="M9 6.3v3.4M9 11.1v1.7" stroke="#c5500a" stroke-width="1.7" fill="none"/></svg>
<svg class="abs" style="left:346.8px;top:640.1px" width="8.4" height="4.2" viewBox="0 0 10 5"><path d="M0 0h10L5 5z" fill="#5f6368"/></svg>
<div class="t hd" style="left:36px;top:677.90px;font-size:11px;">CITY</div>
<div class="t hd" style="right:870.5px;top:677.90px;font-size:11px;letter-spacing:.8px;margin-right:-.8px">USERS</div>
<div class="abs" style="left:36px;top:698px;width:337px;height:1px;background:#dadce0;"></div>
<div class="t nm" style="left:36px;top:709.50px;font-size:12.8px;">New York</div>
<div class="t vl" style="right:870.3px;top:709.50px;font-size:12.8px;">2.3K</div>
<div class="abs" style="left:36px;top:729px;width:337px;height:1px;background:#e4e6e9;"></div>
<div class="abs" style="left:36px;top:728px;width:22px;height:2px;background:#1a73e8;"></div>
<div class="t nm" style="left:36px;top:741.50px;font-size:12.8px;">Toronto</div>
<div class="t vl" style="right:870.3px;top:741.50px;font-size:12.8px;">1.3K</div>
<div class="abs" style="left:36px;top:761px;width:337px;height:1px;background:#e4e6e9;"></div>
<div class="abs" style="left:36px;top:760px;width:13px;height:2px;background:#1a73e8;"></div>
<div class="t nm" style="left:36px;top:773.50px;font-size:12.8px;">Chicago</div>
<div class="t vl" style="right:870.3px;top:773.50px;font-size:12.8px;">1.2K</div>
<div class="abs" style="left:36px;top:793px;width:337px;height:1px;background:#e4e6e9;"></div>
<div class="abs" style="left:36px;top:792px;width:12px;height:2px;background:#1a73e8;"></div>
<div class="t nm" style="left:36px;top:805.50px;font-size:12.8px;">Los Angeles</div>
<div class="t vl" style="right:870.3px;top:805.50px;font-size:12.8px;">1.2K</div>
<div class="abs" style="left:36px;top:825px;width:337px;height:1px;background:#e4e6e9;"></div>
<div class="abs" style="left:36px;top:824px;width:11px;height:2px;background:#1a73e8;"></div>
<div class="t nm" style="left:36px;top:837.50px;font-size:12.8px;">San Jose</div>
<div class="t vl" style="right:870.3px;top:837.50px;font-size:12.8px;">1K</div>
<div class="abs" style="left:36px;top:857px;width:337px;height:1px;background:#e4e6e9;"></div>
<div class="abs" style="left:36px;top:856px;width:10px;height:2px;background:#1a73e8;"></div>
<div class="t nm" style="left:36px;top:869.50px;font-size:12.8px;">Mountain View</div>
<div class="t vl" style="right:870.3px;top:869.50px;font-size:12.8px;">925</div>
<div class="abs" style="left:36px;top:889px;width:337px;height:1px;background:#e4e6e9;"></div>
<div class="abs" style="left:36px;top:888px;width:9px;height:2px;background:#1a73e8;"></div>
<div class="t nm" style="left:36px;top:901.50px;font-size:12.8px;">Montreal</div>
<div class="t vl" style="right:870.3px;top:901.50px;font-size:12.8px;">815</div>
<div class="abs" style="left:36px;top:920px;width:8px;height:2px;background:#1a73e8;"></div>
<div class="t lk" style="right:889px;top:972.55px;font-size:14.5px;">View cities</div>
<svg class="abs" style="left:365px;top:972.3px" width="13" height="12" viewBox="0 0 13 12"><path d="M0.5 6h11M6.7 1l5 5-5 5" fill="none" stroke="#1a73e8" stroke-width="1.5"/></svg>
<!-- card 4 -->
<div class="t ttl" style="left:435.7px;top:631.00px;font-size:14.6px;">Users</div>
<svg class="abs" style="left:479px;top:636.5px" width="8.4" height="4.2" viewBox="0 0 10 5"><path d="M0 0h10L5 5z" fill="#757575"/></svg>
<div class="t ttl" style="left:494.6px;top:630.70px;font-size:15px;letter-spacing:.32px">by Gender</div>
<div class="abs" style="left:515px;top:647px;width:51px;height:0;border-top:1px dashed #c8cbcf"></div>
<div class="pill" style="left:708px;top:628px"></div>
<svg class="abs" style="left:716px;top:634px" width="18" height="16" viewBox="0 0 18 16"><path d="M9 0.2L0.1 15.3h17.8zM9 3.2L15.2 13.8H2.8z" fill="#c5500a" fill-rule="evenodd"/><path d="M9 6.3v3.4M9 11.1v1.7" stroke="#c5500a" stroke-width="1.7" fill="none"/></svg>
<svg class="abs" style="left:746.8px;top:640.1px" width="8.4" height="4.2" viewBox="0 0 10 5"><path d="M0 0h10L5 5z" fill="#5f6368"/></svg>
<svg class="abs" style="left:0;top:0" width="1243" height="1016" viewBox="0 0 1243 1016"><circle cx="603.95" cy="780.1" r="78.45" fill="none" stroke="#4285f4" stroke-width="25.7"/><path d="M603.95 701.65A78.45 78.45 0 1 1 569.22 850.44" fill="none" stroke="#1967d2" stroke-width="25.7"/></svg>
<div class="abs" style="left:484.7px;top:898.7px;width:6px;height:6px;background:#1967d2;border-radius:3px"></div>
<div class="t hd" style="left:496.5px;top:896.05px;font-size:10.5px;letter-spacing:.8px">MALE</div>
<div class="t " style="left:496.5px;top:912.50px;font-size:21px;color:#202124;letter-spacing:-.9px">57.3%</div>
<div class="abs" style="left:651.3px;top:898.7px;width:6px;height:6px;background:#4285f4;border-radius:3px"></div>
<div class="t hd" style="left:663px;top:896.05px;font-size:10.5px;letter-spacing:.65px">FEMALE</div>
<div class="t " style="left:663px;top:912.50px;font-size:21px;color:#202124;letter-spacing:-.2px">42.7%</div>
<div class="t lk" style="right:489px;top:972.55px;font-size:14.5px;">View genders</div>
<svg class="abs" style="left:765px;top:972.3px" width="13" height="12" viewBox="0 0 13 12"><path d="M0.5 6h11M6.7 1l5 5-5 5" fill="none" stroke="#1a73e8" stroke-width="1.5"/></svg>
<!-- card 5 -->
<div class="t ttl" style="left:835.7px;top:631.00px;font-size:14.6px;">Users</div>
<svg class="abs" style="left:879px;top:636.5px" width="8.4" height="4.2" viewBox="0 0 10 5"><path d="M0 0h10L5 5z" fill="#757575"/></svg>
<div class="t ttl" style="left:894.6px;top:630.70px;font-size:15px;letter-spacing:.32px">by Interests</div>
<div class="abs" style="left:915px;top:647px;width:59px;height:0;border-top:1px dashed #c8cbcf"></div>
<div class="pill" style="left:1108px;top:628px"></div>
<svg class="abs" style="left:1116px;top:634px" width="18" height="16" viewBox="0 0 18 16"><path d="M9 0.2L0.1 15.3h17.8zM9 3.2L15.2 13.8H2.8z" fill="#c5500a" fill-rule="evenodd"/><path d="M9 6.3v3.4M9 11.1v1.7" stroke="#c5500a" stroke-width="1.7" fill="none"/></svg>
<svg class="abs" style="left:1146.8px;top:640.1px" width="8.4" height="4.2" viewBox="0 0 10 5"><path d="M0 0h10L5 5z" fill="#5f6368"/></svg>
<div class="t hd" style="left:836px;top:677.90px;font-size:11px;">INTERESTS</div>
<div class="t hd" style="right:71.5px;top:677.90px;font-size:11px;letter-spacing:.8px;margin-right:-.8px">USERS</div>
<div class="abs" style="left:836px;top:698px;width:336px;height:1px;background:#dadce0;"></div>
<div class="t nm" style="left:836px;top:709.50px;font-size:12.8px;">Shoppers/Value Shoppers</div>
<div class="t vl" style="right:71.29999999999995px;top:709.50px;font-size:12.8px;">6.8K</div>
<div class="abs" style="left:836px;top:729px;width:336px;height:1px;background:#e4e6e9;"></div>
<div class="abs" style="left:836px;top:728px;width:204px;height:2px;background:#1a73e8;"></div>
<div class="t nm" style="left:836px;top:741.50px;font-size:12.8px;">Technology/Technophiles</div>
<div class="t vl" style="right:71.29999999999995px;top:741.50px;font-size:12.8px;">6.2K</div>
<div class="abs" style="left:836px;top:761px;width:336px;height:1px;background:#e4e6e9;"></div>
<div class="abs" style="left:836px;top:760px;width:187px;height:2px;background:#1a73e8;"></div>
<div class="t nm" style="left:836px;top:773.50px;font-size:12.8px;">Media &amp; Entert.../Movie Lovers</div>
<div class="t vl" style="right:71.29999999999995px;top:773.50px;font-size:12.8px;">5.4K</div>
<div class="abs" style="left:836px;top:793px;width:336px;height:1px;background:#e4e6e9;"></div>
<div class="abs" style="left:836px;top:792px;width:163px;height:2px;background:#1a73e8;"></div>
<div class="t nm" style="left:836px;top:805.50px;font-size:12.8px;">Travel/Business Travelers</div>
<div class="t vl" style="right:71.29999999999995px;top:805.50px;font-size:12.8px;">4.5K</div>
<div class="abs" style="left:836px;top:825px;width:336px;height:1px;background:#e4e6e9;"></div>
<div class="abs" style="left:836px;top:824px;width:137px;height:2px;background:#1a73e8;"></div>
<div class="t nm" style="left:836px;top:837.50px;font-size:12.8px;">Banking &amp; Fina...vid Investors</div>
<div class="t vl" style="right:71.29999999999995px;top:837.50px;font-size:12.8px;">4.5K</div>
<div class="abs" style="left:836px;top:857px;width:336px;height:1px;background:#e4e6e9;"></div>
<div class="abs" style="left:836px;top:856px;width:137px;height:2px;background:#1a73e8;"></div>
<div class="t nm" style="left:836px;top:869.50px;font-size:12.8px;">Lifestyles &amp; H... Professionals</div>
<div class="t vl" style="right:71.29999999999995px;top:869.50px;font-size:12.8px;">4.3K</div>
<div class="abs" style="left:836px;top:889px;width:336px;height:1px;background:#e4e6e9;"></div>
<div class="abs" style="left:836px;top:888px;width:131px;height:2px;background:#1a73e8;"></div>
<div class="t nm" style="left:836px;top:901.50px;font-size:12.8px;">Sports &amp; Fitne... Fitness Buffs</div>
<div class="t vl" style="right:71.29999999999995px;top:901.50px;font-size:12.8px;">4.3K</div>
<div class="abs" style="left:836px;top:920px;width:130px;height:2px;background:#1a73e8;"></div>
<div class="t lk" style="right:89px;top:972.55px;font-size:14.5px;">View interests</div>
<svg class="abs" style="left:1165px;top:972.3px" width="13" height="12" viewBox="0 0 13 12"><path d="M0.5 6h11M6.7 1l5 5-5 5" fill="none" stroke="#1a73e8" stroke-width="1.5"/></svg>

</body>
</html>
